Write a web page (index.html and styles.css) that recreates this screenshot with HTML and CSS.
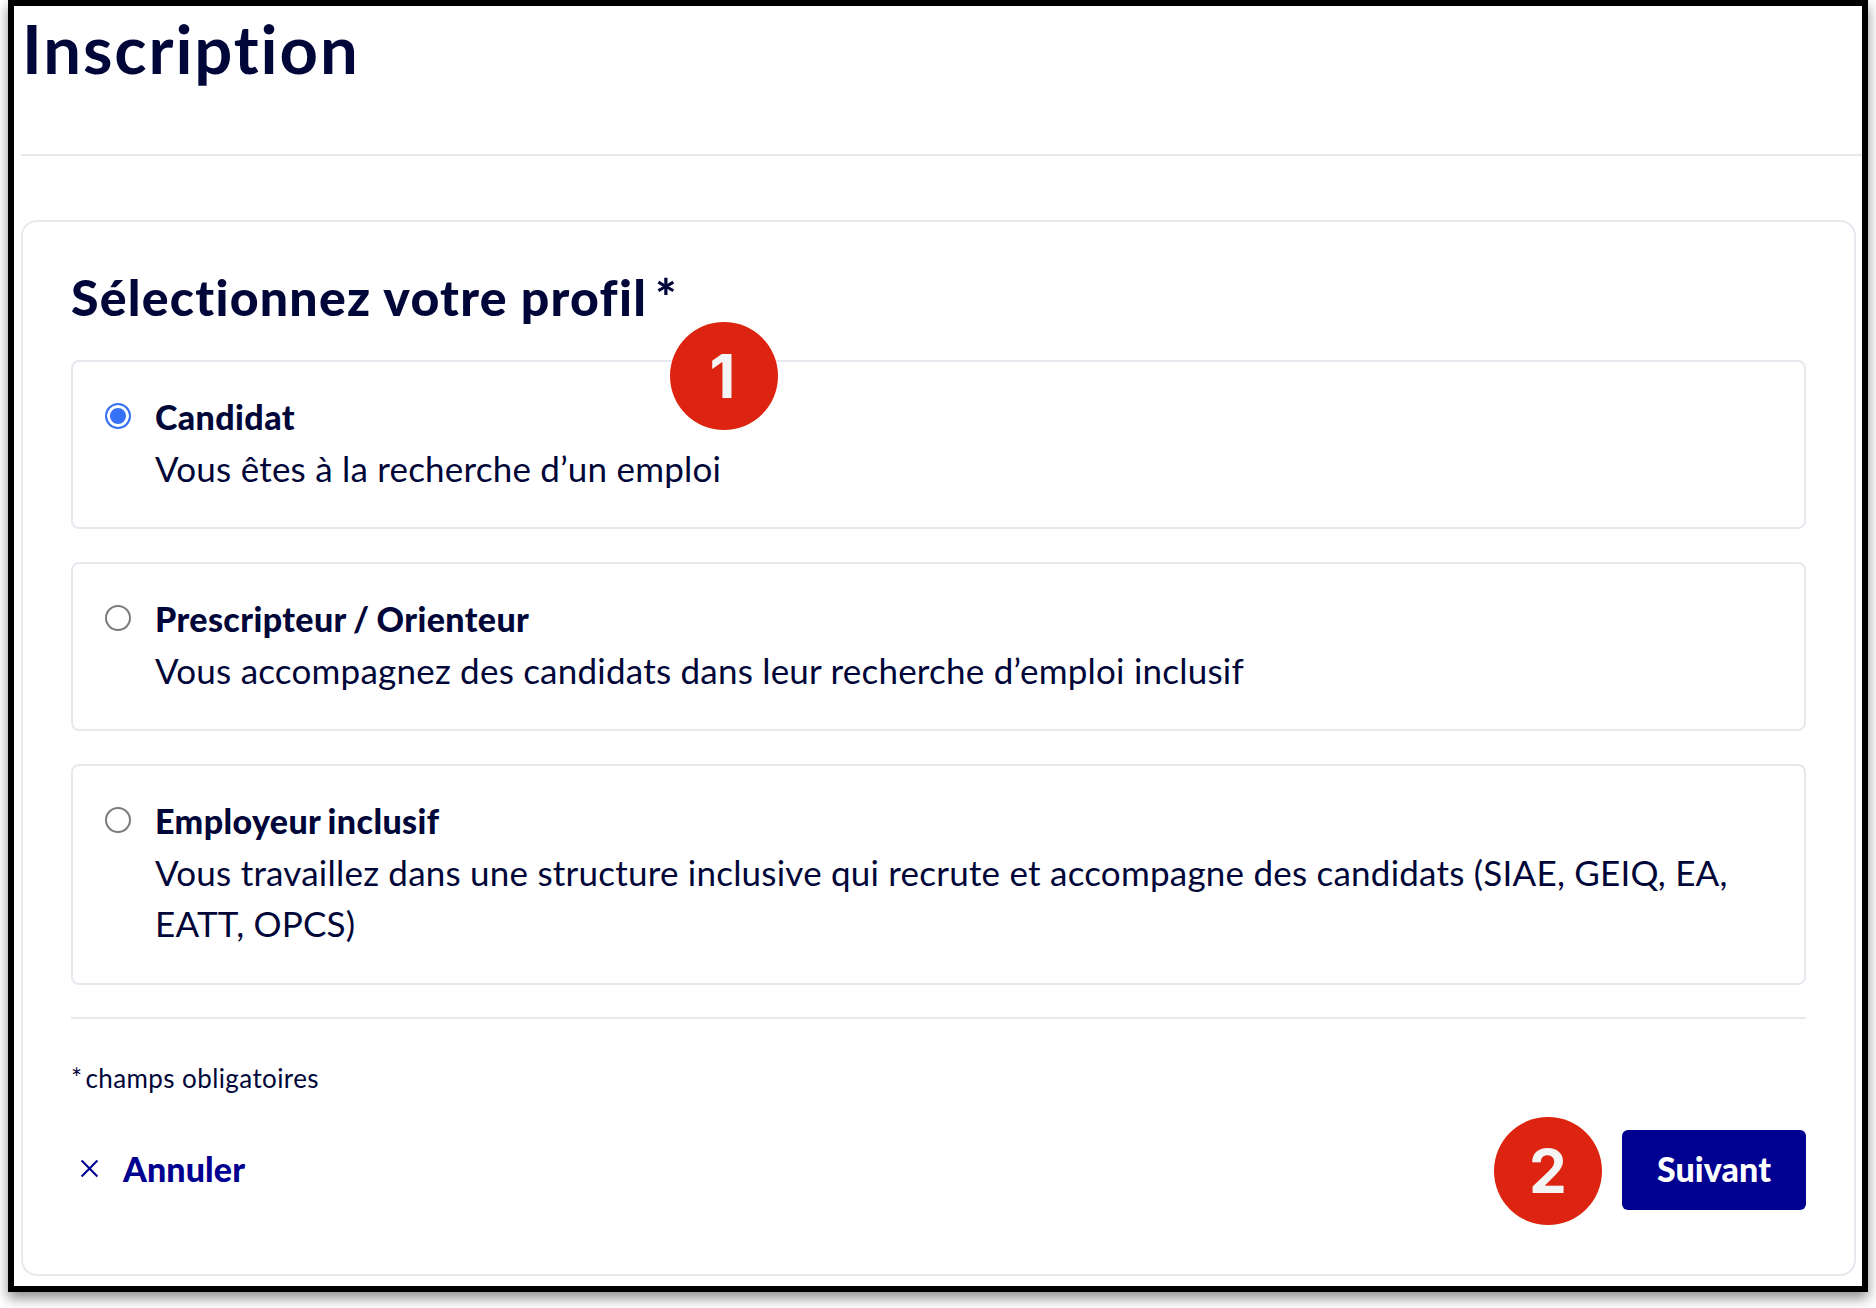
FILE: index.html
```html
<!DOCTYPE html>
<html lang="fr">
<head>
<meta charset="utf-8">
<title>Inscription</title>
<link rel="stylesheet" href="styles.css">
</head>
<body>
<div class="frame">
  <header class="page-head"><h1 class="page-title">Inscription</h1></header>
  <form class="card">
    <h2 class="card-title">Sélectionnez votre <span class="title-last">profil *</span></h2>
    <div class="options">
      <label class="option">
        <span class="radio radio-on"></span>
        <span class="option-text"><strong class="option-name">Candidat</strong><span class="option-desc">Vous êtes à la recherche d’un emploi</span></span>
      </label>
      <label class="option">
        <span class="radio"></span>
        <span class="option-text"><strong class="option-name">Prescripteur / Orienteur</strong><span class="option-desc">Vous accompagnez des candidats dans leur recherche d’emploi inclusif</span></span>
      </label>
      <label class="option">
        <span class="radio"></span>
        <span class="option-text"><strong class="option-name">Employeur inclusif</strong><span class="option-desc">Vous travaillez dans une structure inclusive qui recrute et accompagne des candidats (SIAE, GEIQ, EA, EATT, OPCS)</span></span>
      </label>
    </div>
    <p class="required"><span class="required-star">* </span>champs obligatoires</p>
    <div class="actions">
      <a class="cancel">
        <svg class="cancel-icon" viewBox="0 0 18 18" aria-hidden="true"><path d="M1.5 1.5 16.5 16.5M16.5 1.5 1.5 16.5" fill="none" stroke="currentColor" stroke-width="2"/></svg>
        <span>Annuler</span>
      </a>
      <button class="next" type="button">Suivant</button>
    </div>
  </form>
  <span class="marker marker-one">1</span>
  <span class="marker marker-two">2</span>
</div>
</body>
</html>
```
FILE: styles.css
```css
html, body { margin: 0; padding: 0; background: #fff; }
body { height: 1308px; overflow: hidden; font-family: "Lato", "Liberation Sans", sans-serif; font-variant-ligatures: none; color: #000638; }
.frame {
  position: relative;
  box-sizing: border-box;
  width: 1860px;
  height: 1292px;
  margin-left: 8px;
  border: 6px solid #000;
  box-shadow: 0 6px 12px rgba(0,0,0,.45);
  background: #fff;
  padding: 0 0 0 7px;
}
.page-head { height: 148px; border-bottom: 2px solid #e7e7ee; }
.page-title { margin: 0; font-size: 67px; line-height: 83px; font-weight: 700; padding: 1px 0 0 1px; letter-spacing: 1.9px; }
.card {
  box-sizing: border-box;
  height: 1056px;
  width: 1835px;
  margin-top: 64px;
  border: 2px solid #e7e7ee;
  border-radius: 16px;
  padding: 42px 48px 0 48px;
}
.card-title { height: 66px; margin: 0 0 30px; font-size: 50px; line-height: 66px; font-weight: 900; letter-spacing: 1.25px; white-space: nowrap; }
.title-last { word-spacing: -5px; }
.options { display: flex; flex-direction: column; gap: 33px; padding-bottom: 32px; border-bottom: 2px solid #e7e7ee; }
.option {
  display: flex;
  gap: 24px;
  padding: 30px 32px 33px;
  border: 2px solid #e7e7ee;
  border-radius: 8px;
}
.radio { box-sizing: border-box; flex: none; width: 26px; height: 26px; margin-top: 11px; border: 2px solid #7b7b7b; border-radius: 50%; background: #fff; }
.radio-on { border-color: #3671f5; background: #3671f5; box-shadow: inset 0 0 0 3px #fff; }
.option-text { display: flex; flex-direction: column; font-size: 35px; line-height: 51.5px; letter-spacing: .22px; }
.option-name { font-size: 34px; line-height: 50.5px; font-weight: 900; letter-spacing: .4px; word-spacing: -1.5px; }
.option-desc { font-weight: 400; }
.required { margin: 0; padding-top: 41px; font-size: 26px; line-height: 36px; letter-spacing: .4px; }
.required-star { word-spacing: -4px; }
.actions { display: flex; justify-content: space-between; align-items: center; margin-top: 34px; }
.cancel { display: flex; align-items: center; gap: 24px; padding: 0 0 2px 9px; color: #000091; font-size: 34px; font-weight: 900; letter-spacing: .1px; }
.cancel-icon { width: 19px; height: 19px; }
.next { width: 184px; height: 80px; padding: 0 0 2px; border: 0; border-radius: 6px; background: #000091; color: #fff; font: 900 34px "Lato", "Liberation Sans", sans-serif; letter-spacing: .1px; }
.marker {
  position: absolute;
  width: 108px;
  height: 108px;
  border-radius: 50%;
  background: #dc2410;
  color: #f4f4f4;
  font-family: "Inter", "Liberation Sans", sans-serif;
  font-size: 60px;
  font-weight: 700;
  line-height: 108px;
  text-align: center;
}
.marker-one { left: 656px; top: 316px; text-indent: -3px; }
.marker-two { left: 1480px; top: 1111px; }
```
